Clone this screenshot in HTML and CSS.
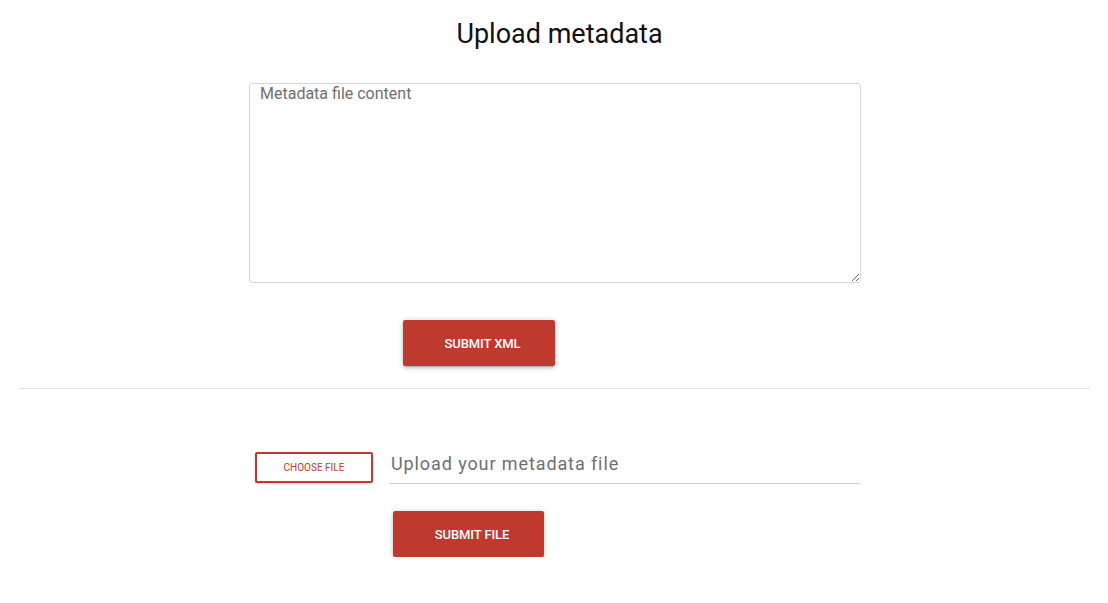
FILE: index.html
```html
<!DOCTYPE html>
<html lang="en">
<head>
<meta charset="utf-8">
<title>Upload metadata</title>
<link rel="stylesheet" href="styles.css">
</head>
<body>
<main class="page">
  <h1 class="title">Upload metadata</h1>
  <section class="block xml-block">
    <textarea class="xml-input" placeholder="Metadata file content"></textarea>
    <button class="btn btn-xml" type="button">SUBMIT XML</button>
  </section>
  <hr class="divider">
  <section class="block file-block">
    <div class="file-row">
      <button class="btn-outline" type="button">CHOOSE FILE</button>
      <div class="file-path">Upload your metadata file</div>
    </div>
    <button class="btn btn-file" type="button">SUBMIT FILE</button>
  </section>
</main>
</body>
</html>
```

FILE: styles.css
```css
* { box-sizing: border-box; }
html, body { margin: 0; padding: 0; background: #fff; }
body {
  font-family: Roboto, "Noto Sans", "Liberation Sans", sans-serif;
  color: #000;
}
.page { display: flex; flex-direction: column; }
.title {
  margin: 0;
  padding-top: 19px;
  padding-left: 11px;
  font-size: 27px;
  line-height: 30px;
  font-weight: 400;
  text-align: center;
  color: #111;
}
.block {
  width: 612px;
  margin: 0 auto;
  padding-left: 1px;
  display: flex;
  flex-direction: column;
}
.xml-block { margin-top: 34px; }
.xml-input {
  width: 612px;
  height: 200px;
  border: 1px solid #d6d6d6;
  border-radius: 3px;
  padding: 0 10px;
  font-family: Roboto, "Noto Sans", "Liberation Sans", sans-serif;
  font-size: 16px;
  line-height: 20px;
  color: #333;
  resize: both;
  outline: none;
}
.xml-input::placeholder { color: #6f6f6f; }
.btn {
  align-self: flex-start;
  height: 46px;
  padding: 0 0 0 7px;
  border: none;
  border-radius: 2px;
  background: #c0392f;
  color: #fff;
  font-family: Roboto, "Noto Sans", "Liberation Sans", sans-serif;
  font-size: 13px;
  font-weight: 500;
  letter-spacing: -0.1px;
  box-shadow: 0 2px 3px 0 rgba(0,0,0,.14), 0 3px 1px -2px rgba(0,0,0,.10), 0 1px 6px 0 rgba(0,0,0,.18);
  cursor: pointer;
}
.btn-xml { width: 152px; margin-top: 37px; margin-left: 154px; }
.divider {
  margin: 22px 18px 0 20px;
  border: none;
  border-top: 1px solid #e3e3e3;
  height: 0;
}
.file-block { margin-top: 62px; }
.file-row {
  display: flex;
  align-items: flex-end;
  height: 33px;
}
.btn-outline {
  width: 118px;
  height: 31px;
  margin-left: 6px;
  margin-bottom: 1px;
  border: 2px solid #c0392f;
  border-radius: 2px;
  background: #fff;
  color: #c0392f;
  font-family: Roboto, "Noto Sans", "Liberation Sans", sans-serif;
  font-size: 10px;
  font-weight: 400;
  box-shadow: 0 1px 3px rgba(0,0,0,.18);
  cursor: pointer;
}
.file-path {
  flex: 1;
  margin-left: 16px;
  height: 40px;
  border-bottom: 1px solid #cfcfcf;
  padding-left: 2px;
  padding-top: 7px;
  font-size: 18px;
  line-height: 26px;
  letter-spacing: 0.9px;
  color: #6f6f6f;
}
.btn-file { width: 151px; margin-top: 27px; margin-left: 144px; }
```
